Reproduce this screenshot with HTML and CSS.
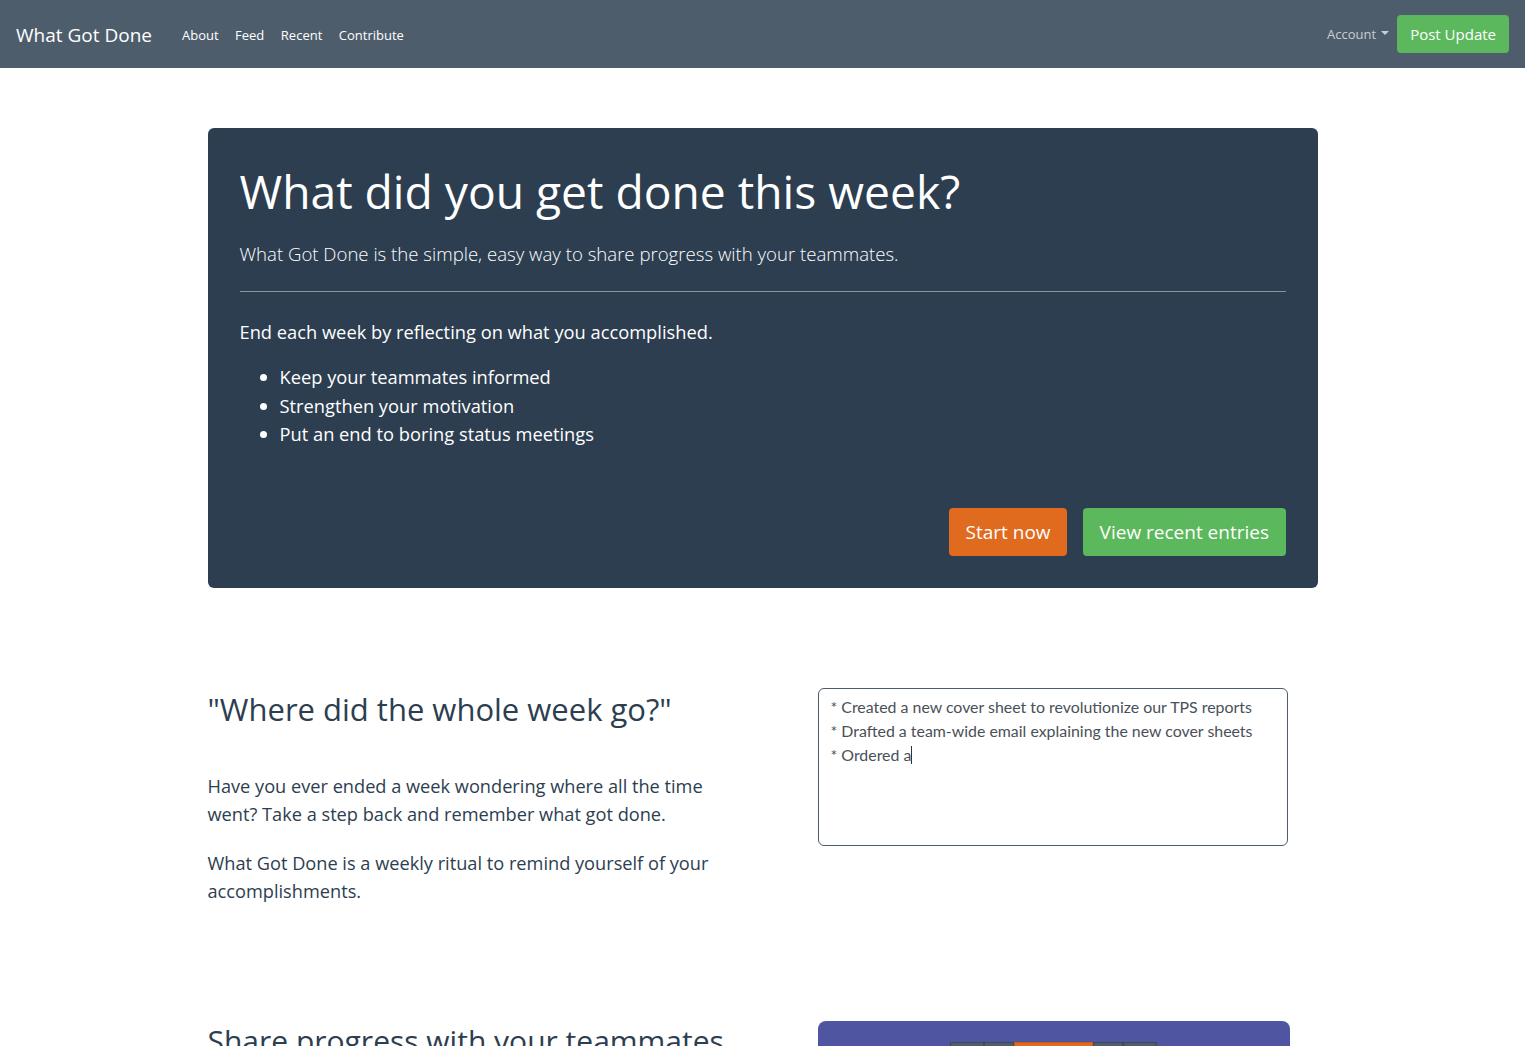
FILE: index.html
```html
<!DOCTYPE html>
<html>
<head>
<meta charset="utf-8">
<title>What Got Done</title>
<link rel="stylesheet" href="styles.css">
</head>
<body>
<nav class="navbar">
  <div class="nav-left">
    <a class="brand" href="#">What Got Done</a>
    <a class="nav-link" href="#">About</a>
    <a class="nav-link" href="#">Feed</a>
    <a class="nav-link" href="#">Recent</a>
    <a class="nav-link" href="#">Contribute</a>
  </div>
  <div class="nav-right">
    <a class="account" href="#">Account <span class="caret"></span></a>
    <a class="btn btn-green btn-nav" href="#">Post Update</a>
  </div>
</nav>

<main class="container">
  <section class="hero">
    <h1 class="hero-title">What did you get done this week?</h1>
    <p class="lead">What Got Done is the simple, easy way to share progress with your teammates.</p>
    <hr class="hero-rule">
    <p class="hero-text">End each week by reflecting on what you accomplished.</p>
    <ul class="hero-list">
      <li>Keep your teammates informed</li>
      <li>Strengthen your motivation</li>
      <li>Put an end to boring status meetings</li>
    </ul>
    <div class="hero-actions">
      <a class="btn btn-lg btn-orange" href="#">Start now</a>
      <a class="btn btn-lg btn-green" href="#">View recent entries</a>
    </div>
  </section>

  <section class="feature">
    <div class="feature-text">
      <h2 class="feature-title">"Where did the whole week go?"</h2>
      <p>Have you ever ended a week wondering where all the time went? Take a step back and remember what got done.</p>
      <p>What Got Done is a weekly ritual to remind yourself of your accomplishments.</p>
    </div>
    <div class="feature-demo">
      <div class="demo-box">
        <div>* Created a new cover sheet to revolutionize our TPS reports</div>
        <div>* Drafted a team-wide email explaining the new cover sheets</div>
        <div>* Ordered a<span class="cursor"></span></div>
      </div>
    </div>
  </section>

  <section class="feature feature-second">
    <div class="feature-text">
      <h2 class="feature-title feature-title-small">Share progress with your teammates</h2>
    </div>
    <div class="feature-demo">
      <div class="shot">
        <div class="shot-bar">
          <span class="tab tab-a"></span><span class="tab tab-b"></span><span class="tab tab-active"></span><span class="tab tab-b"></span><span class="tab tab-a"></span>
        </div>
      </div>
    </div>
  </section>
</main>
</body>
</html>
```

FILE: styles.css
```css
html, body {
  margin: 0;
  padding: 0;
}
body {
  font-family: "Open Sans", "Noto Sans", sans-serif;
  color: #2c3e50;
  background: #fff;
}
a { text-decoration: none; }

.navbar {
  height: 68px;
  background: #4e5d6c;
  display: flex;
  align-items: center;
  justify-content: space-between;
  padding: 0 16px;
}
.nav-left, .nav-right {
  display: flex;
  align-items: center;
}
.brand {
  color: #fff;
  font-size: 19px;
  margin-right: 30px;
  padding-top: 1px;
}
.nav-link {
  color: #fff;
  font-size: 13px;
  margin-right: 16.5px;
  padding-top: 2px;
}
.account {
  color: #c8ced4;
  font-size: 13px;
  margin-right: 8px;
  display: flex;
  align-items: center;
}
.caret {
  display: inline-block;
  margin-left: 5px;
  border-top: 4px solid #c8ced4;
  border-left: 4px solid transparent;
  border-right: 4px solid transparent;
  margin-top: -2px;
}
.btn {
  display: inline-flex;
  align-items: center;
  justify-content: center;
  color: #fff;
  border-radius: 4px;
}
.btn-green { background: #5cb85c; }
.btn-orange { background: #e06a1e; }
.btn-nav {
  height: 38px;
  padding: 0 13px;
  font-size: 15px;
}
.btn-lg {
  height: 48px;
  padding: 0 16.5px;
  font-size: 19px;
}

.container {
  width: 1110px;
  margin: 0 auto;
  padding-top: 60px;
}

.hero {
  background: #2c3e50;
  color: #fff;
  border-radius: 6px;
  padding: 34px 32px 32px;
}
.hero-title {
  margin: 0;
  font-size: 46.2px;
  font-weight: 400;
  line-height: 60px;
}
.lead {
  font-size: 18.6px;
  font-weight: 300;
  margin: 19px 0 0;
}
.hero-rule {
  border: 0;
  border-top: 1px solid rgba(255,255,255,0.45);
  margin: 25px 0 27px;
}
.hero-text {
  font-size: 18.3px;
  margin: 0 0 19px;
}
.hero-list {
  font-size: 18.3px;
  line-height: 28.5px;
  margin: 0;
  padding-left: 40px;
}
.hero-actions {
  display: flex;
  justify-content: flex-end;
  gap: 16px;
  margin-top: 59px;
}

.feature {
  display: flex;
  margin-top: 100px;
}
.feature-text {
  width: 540px;
  font-size: 18.2px;
  line-height: 28.5px;
}
.feature-title {
  font-size: 31px;
  font-weight: 400;
  margin: 3px 0 44px;
  line-height: 1.2;
}
.feature-title-small {
  font-size: 30px;
  margin-top: 6px;
}
.feature-text p {
  margin: 0 0 20px;
}
.feature-demo {
  flex: 1;
  padding-left: 70px;
}
.demo-box {
  width: 470px;
  height: 158px;
  box-sizing: border-box;
  border: 1px solid #4e5d6c;
  border-radius: 6px;
  padding: 6px 12px;
  font-family: "Lato", sans-serif;
  font-size: 15.9px;
  line-height: 24px;
  color: #495057;
}
.cursor {
  display: inline-block;
  width: 1px;
  height: 18px;
  background: #333;
  vertical-align: -3px;
}
.feature-second {
  margin-top: 91px;
}
.shot {
  width: 472px;
  height: 60px;
  background: #4f55a0;
  border-radius: 8px 8px 0 0;
  margin-top: 4px;
  display: flex;
  justify-content: center;
}
.shot-bar {
  margin-top: 21px;
  display: flex;
}
.tab {
  height: 12px;
  box-sizing: border-box;
  background: #4e5d6c;
  border: 1px solid #3d4a57;
}
.tab-a { width: 34px; }
.tab-b { width: 30px; }
.tab-active {
  width: 79px;
  background: #e06a1e;
  border-color: #c45a14;
}
```
